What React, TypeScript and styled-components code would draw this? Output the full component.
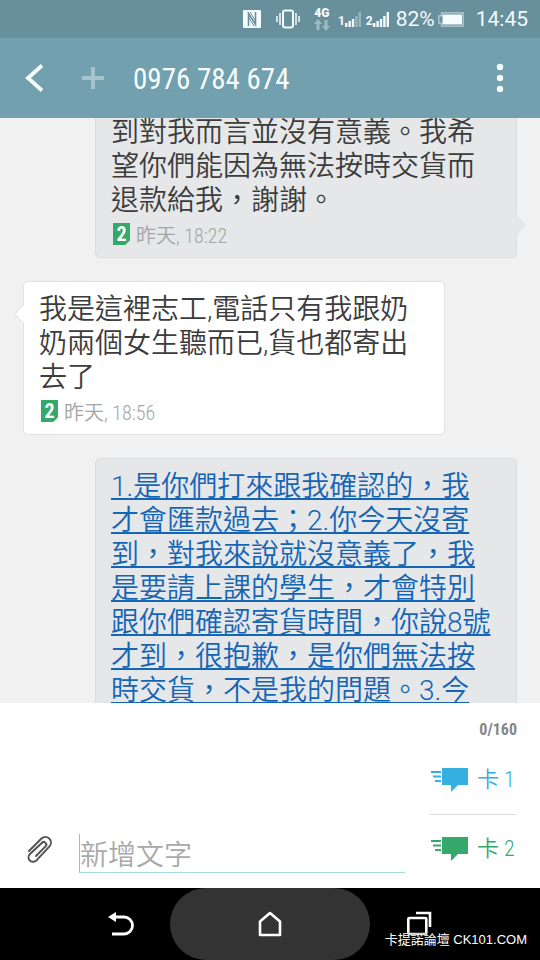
import React from "react";
import styled, { createGlobalStyle } from "styled-components";

const CONDENSED = `"Roboto Condensed", "Liberation Sans Narrow", Roboto, "Noto Sans CJK TC", sans-serif`;
const BODY = `Roboto, "Noto Sans CJK TC", sans-serif`;

const GlobalStyle = createGlobalStyle`
  *, *::before, *::after { box-sizing: border-box; }
  body { margin: 0; background: #f0f0f0; font-family: ${BODY}; }
  button { border: 0; padding: 0; background: none; font: inherit; color: inherit; cursor: pointer; }
  svg { display: block; }
`;

const Screen = styled.div`
  position: relative;
  display: flex;
  flex-direction: column;
  height: 100vh;
  overflow: hidden;
`;

const StatusBar = styled.div`
  flex: none;
  display: flex;
  align-items: center;
  justify-content: flex-end;
  height: 38px;
  padding-right: 12px;
  background: #688f9c;
  color: #f4fcff;
`;

const StatusItem = styled.div<{ $gap: number }>`
  display: flex;
  align-items: flex-end;
  margin-left: ${(p) => p.$gap}px;
`;

const StatusText = styled.span<{ $gap: number }>`
  margin-left: ${(p) => p.$gap}px;
  font-size: 21px;
  line-height: 38px;
`;

const Network = styled.div`
  display: flex;
  flex-direction: column;
  align-items: center;
  margin-left: 14px;
  font-size: 12px;
  font-weight: 900;
  line-height: 12px;
`;

const SimDigit = styled.span`
  font-size: 12px;
  font-weight: 700;
  line-height: 11px;
`;

const Header = styled.header`
  flex: none;
  display: flex;
  align-items: center;
  height: 80px;
  padding: 0 24px;
  background: #73a0ae;
  color: #f6fdff;
`;

const HeaderButton = styled.button<{ $gap?: number }>`
  display: grid;
  place-items: center;
  height: 48px;
  margin-left: ${(p) => p.$gap ?? 0}px;
`;

const Title = styled.h1`
  flex: 1;
  margin: 0 0 0 28px;
  padding-top: 2px;
  font-family: ${CONDENSED};
  font-size: 29px;
  font-weight: 400;
  line-height: 40px;
`;

const Thread = styled.main`
  flex: 1;
  min-height: 0;
  display: flex;
  flex-direction: column;
  gap: 23px;
  overflow: hidden;
  padding: 0 23px;
  background: #f1f1f1;
`;

const Bubble = styled.article<{ $side: "in" | "out"; $scrolled?: boolean }>`
  position: relative;
  flex: none;
  margin-left: ${(p) => (p.$side === "out" ? 72 : 0)}px;
  margin-right: ${(p) => (p.$side === "in" ? 72 : 0)}px;
  margin-top: ${(p) => (p.$scrolled ? -14 : 0)}px;
  padding: 11px 15px;
  border: 1px solid ${(p) => (p.$side === "out" ? "#dcdddf" : "#e2e2e2")};
  border-radius: 5px;
  background: ${(p) => (p.$side === "out" ? "#e5e7e9" : "#ffffff")};
`;

const Tail = styled.svg<{ $side: "in" | "out" }>`
  position: absolute;
  width: 10px;
  height: 22px;
  ${(p) => (p.$side === "out" ? "right: -10px; bottom: 21px;" : "left: -10px; top: 21px;")}
`;

const Message = styled.p`
  margin: 0;
  color: #3c3c3c;
  font-size: 28px;
  font-weight: 350;
  line-height: 34px;
  white-space: nowrap;
`;

const Line = styled.span`
  display: block;
`;

const MessageLink = styled.a`
  color: #1565b5;
  text-decoration: underline;
  text-decoration-thickness: 2px;
  text-underline-offset: 2px;
  text-decoration-skip-ink: none;
`;

const Meta = styled.div`
  display: flex;
  align-items: center;
  gap: 6px;
  height: 24px;
  margin-top: 4px;
  padding-left: 2px;
  color: #a5a5a5;
  font-family: ${CONDENSED};
  font-size: 20px;
  font-weight: 350;
`;

const SimBadge = styled.span`
  display: grid;
  place-items: center;
  width: 17px;
  height: 22px;
  background: #35a86c;
  clip-path: polygon(0 0, 100% 0, 100% 78%, 72% 100%, 0 100%);
  color: #fff;
  font-size: 20px;
  font-weight: 700;
  line-height: 22px;
`;

const Composer = styled.form`
  flex: none;
  display: flex;
  align-items: flex-end;
  padding: 14px 23px 14px 27px;
  background: #fff;
`;

const AttachButton = styled.button`
  display: grid;
  place-items: center;
  width: 26px;
  height: 50px;
`;

const TextField = styled.input`
  flex: 1;
  min-width: 0;
  height: 39px;
  margin: 0 24px 1px 26px;
  padding: 4px 0 0;
  border: 0;
  border-left: 1px solid #b4b4b4;
  border-bottom: 1px solid #a3dbe2;
  border-radius: 0;
  outline: 0;
  background: transparent;
  color: #3c3c3c;
  font-family: ${BODY};
  font-size: 28px;
  font-weight: 350;
  &::placeholder { color: #a9a9a9; opacity: 1; }
`;

const SendColumn = styled.div`
  display: flex;
  flex-direction: column;
  align-items: stretch;
  width: 88px;
`;

const Counter = styled.output`
  margin-bottom: 12px;
  color: #858585;
  font-family: ${CONDENSED};
  font-size: 16px;
  font-weight: 700;
  line-height: 26px;
  text-align: right;
`;

const SendButton = styled.button<{ $color: string }>`
  display: flex;
  align-items: center;
  gap: 9px;
  height: 50px;
  padding-left: 2px;
  color: ${(p) => p.$color};
  font-family: ${CONDENSED};
  font-size: 22px;
  font-weight: 350;
  line-height: 26px;
  white-space: nowrap;
`;

const Divider = styled.hr`
  width: 100%;
  height: 1px;
  margin: 9px 0;
  border: 0;
  background: #dedede;
`;

const NavBar = styled.nav`
  flex: none;
  display: grid;
  grid-template-columns: 1fr 200px 1fr;
  height: 72px;
  background: #000;
  color: #fff;
`;

const NavButton = styled.button<{ $home?: boolean; $side?: "left" | "right" }>`
  display: flex;
  align-items: center;
  justify-content: ${(p) => (p.$side === "left" ? "flex-end" : p.$side === "right" ? "flex-start" : "center")};
  padding: 0 36px;
  border-radius: ${(p) => (p.$home ? 36 : 0)}px;
  background: ${(p) => (p.$home ? "#333" : "transparent")};
`;

const Watermark = styled.div`
  position: absolute;
  right: 13px;
  bottom: 9px;
  color: #fff;
  font-family: "Liberation Sans", "Noto Sans CJK TC", sans-serif;
  font-size: 13px;
  line-height: 22px;
  text-shadow: 0 0 2px #000;
`;

function NfcIcon() {
  return (
    <svg width="18" height="18" viewBox="0 0 18 18" fill="none">
      <rect width="18" height="18" rx="1" fill="currentColor" />
      <path d="M5.500 16V3.500L12.500 14.500V2" stroke="#688f9c" strokeWidth="1.600" />
      <path d="M5.500 7l5.500 9M7 2l5.500 9" stroke="#688f9c" strokeWidth="1" />
    </svg>
  );
}

function VibrateIcon() {
  return (
    <svg width="24" height="20" viewBox="0 0 24 20" fill="none" stroke="currentColor">
      <rect x="7" y="1.500" width="10" height="17" rx="2" strokeWidth="2" />
      <path d="M4 4v12M20 4v12M1 7v6M23 7v6" strokeWidth="1.500" />
    </svg>
  );
}

function DataArrows() {
  return (
    <svg width="16" height="12" viewBox="0 0 16 12" fill="currentColor" opacity=".4">
      <path d="M4 0l4 5H5.500v6h-3V5H0zM12 12l4-5h-2.500V1h-3v6H8z" />
    </svg>
  );
}

function SignalBars({ level }: { level: number }) {
  return (
    <svg width="17" height="15" viewBox="0 0 17 15" fill="currentColor">
      {[4, 6, 8, 11, 15].map((h, i) => (
        <rect key={h} x={i * 3.4} y={15 - h} width="2.400" height={h} opacity={i < level ? 1 : 0.35} />
      ))}
    </svg>
  );
}

function BatteryIcon() {
  return (
    <svg width="26" height="15" viewBox="0 0 26 15" fill="none">
      <path d="M3.500.8h21.700v13.400H3.500v-3H.8V3.800h2.700z" stroke="currentColor" strokeWidth="1.200" opacity=".6" />
      <rect x="4.500" y="2.500" width="19.500" height="10" fill="currentColor" />
    </svg>
  );
}

function BubbleTail({ side }: { side: "in" | "out" }) {
  const out = side === "out";
  return (
    <Tail $side={side} viewBox="0 0 10 22" aria-hidden="true">
      <path d={out ? "M0 1l9 10-9 10z" : "M10 1L1 11l9 10z"} fill={out ? "#e5e7e9" : "#fff"} />
      <path d={out ? "M0 1l9 10-9 10" : "M10 1L1 11l9 10"} fill="none" stroke="#dedfe1" />
    </Tail>
  );
}

function SendIcon() {
  return (
    <svg width="37" height="26" viewBox="0 0 37 26" fill="currentColor" aria-hidden="true">
      <path d="M11 1h26v17H27l-7 7v-7h-9zM0 4h10v2H0zM2 8.500h8v2H2zM4 13h6v2H4z" />
    </svg>
  );
}

function PaperclipIcon() {
  return (
    <svg width="26" height="28" viewBox="0 0 26 28" fill="none" stroke="#555" strokeWidth="2" strokeLinecap="round">
      <path d="M2 16L14.500 3.500a5.600 5.600 0 0 1 8.200 7.600L9.500 25.300a4.500 4.500 0 0 1-6.800-6L14.800 8a2.500 2.500 0 0 1 3.900 3.200L9 21" />
    </svg>
  );
}

function Lines({ text }: { text: string[] }) {
  return (
    <>
      {text.map((line) => (
        <Line key={line}>{line}</Line>
      ))}
    </>
  );
}

function Stamp({ time }: { time: string }) {
  return (
    <Meta>
      <SimBadge>2</SimBadge>
      <time>{time}</time>
    </Meta>
  );
}

export default function App() {
  return (
    <Screen>
      <GlobalStyle />
      <StatusBar>
        <StatusItem $gap={0}><NfcIcon /></StatusItem>
        <StatusItem $gap={15}><VibrateIcon /></StatusItem>
        <Network>
          4G
          <DataArrows />
        </Network>
        <StatusItem $gap={8}><SimDigit>1</SimDigit><SignalBars level={3} /></StatusItem>
        <StatusItem $gap={4}><SimDigit>2</SimDigit><SignalBars level={5} /></StatusItem>
        <StatusText $gap={6}>82%</StatusText>
        <StatusItem $gap={3}><BatteryIcon /></StatusItem>
        <StatusText $gap={12}>14:45</StatusText>
      </StatusBar>

      <Header>
        <HeaderButton type="button" aria-label="返回">
          <svg width="20" height="28" viewBox="0 0 20 28" fill="none" stroke="currentColor" strokeWidth="3.800">
            <path d="M18 1.500L4 14l14 12.500" />
          </svg>
        </HeaderButton>
        <HeaderButton type="button" aria-label="新增聯絡人" $gap={37}>
          <svg width="24" height="24" viewBox="0 0 24 24" stroke="#a5c4cd" strokeWidth="4">
            <path d="M12 1v22M1 12h22" />
          </svg>
        </HeaderButton>
        <Title>0976 784 674</Title>
        <HeaderButton type="button" aria-label="更多">
          <svg width="32" height="30" viewBox="0 0 32 30" fill="currentColor">
            <circle cx="16" cy="4" r="3.200" />
            <circle cx="16" cy="15" r="3.200" />
            <circle cx="16" cy="26" r="3.200" />
          </svg>
        </HeaderButton>
      </Header>

      <Thread>
        <Bubble $side="out" $scrolled>
          <Message>
            <Lines text={["到對我而言並沒有意義。我希", "望你們能因為無法按時交貨而", "退款給我，謝謝。"]} />
          </Message>
          <Stamp time="昨天, 18:22" />
          <BubbleTail side="out" />
        </Bubble>

        <Bubble $side="in">
          <Message>
            <Lines text={["我是這裡志工,電話只有我跟奶", "奶兩個女生聽而已,貨也都寄出", "去了"]} />
          </Message>
          <Stamp time="昨天, 18:56" />
          <BubbleTail side="in" />
        </Bubble>

        <Bubble $side="out">
          <Message>
            <MessageLink href="#message">
              1.是你們打來跟我確認的，我
              <br />
              才會匯款過去；2.你今天沒寄
              <br />
              到，對我來說就沒意義了，我
              <br />
              是要請上課的學生，才會特別
              <br />
              跟你們確認寄貨時間，你說8號
              <br />
              才到，很抱歉，是你們無法按
              <br />
              時交貨，不是我的問題。3.今
            </MessageLink>
          </Message>
        </Bubble>
      </Thread>

      <Composer onSubmit={(e) => e.preventDefault()}>
        <AttachButton type="button" aria-label="附加檔案"><PaperclipIcon /></AttachButton>
        <TextField type="text" placeholder="新增文字" aria-label="新增文字" />
        <SendColumn>
          <Counter>0/160</Counter>
          <SendButton type="submit" $color="#35aee0"><SendIcon />卡 1</SendButton>
          <Divider />
          <SendButton type="submit" $color="#35a86c"><SendIcon />卡 2</SendButton>
        </SendColumn>
      </Composer>

      <NavBar>
        <NavButton type="button" aria-label="返回" $side="left">
          <svg width="26" height="26" viewBox="0 0 26 26" fill="none" stroke="currentColor" strokeWidth="2.800">
            <path d="M6 6h10a8.500 8.500 0 0 1 0 17H4" />
            <path d="M0 6l8-5v10z" fill="currentColor" stroke="none" />
          </svg>
        </NavButton>
        <NavButton type="button" aria-label="首頁" $home>
          <svg width="24" height="26" viewBox="0 0 24 26" fill="none" stroke="currentColor" strokeWidth="2.600" strokeLinejoin="round">
            <path d="M2 10.500L12 2l10 8.500V24H2z" />
          </svg>
        </NavButton>
        <NavButton type="button" aria-label="最近使用" $side="right">
          <svg width="26" height="26" viewBox="0 0 26 26" fill="none" stroke="currentColor" strokeWidth="2.600">
            <rect x="2.300" y="7" width="18" height="16" rx="1" />
            <path d="M10 2h14v14" />
          </svg>
        </NavButton>
      </NavBar>
      <Watermark>卡提諾論壇 CK101.COM</Watermark>
    </Screen>
  );
}
